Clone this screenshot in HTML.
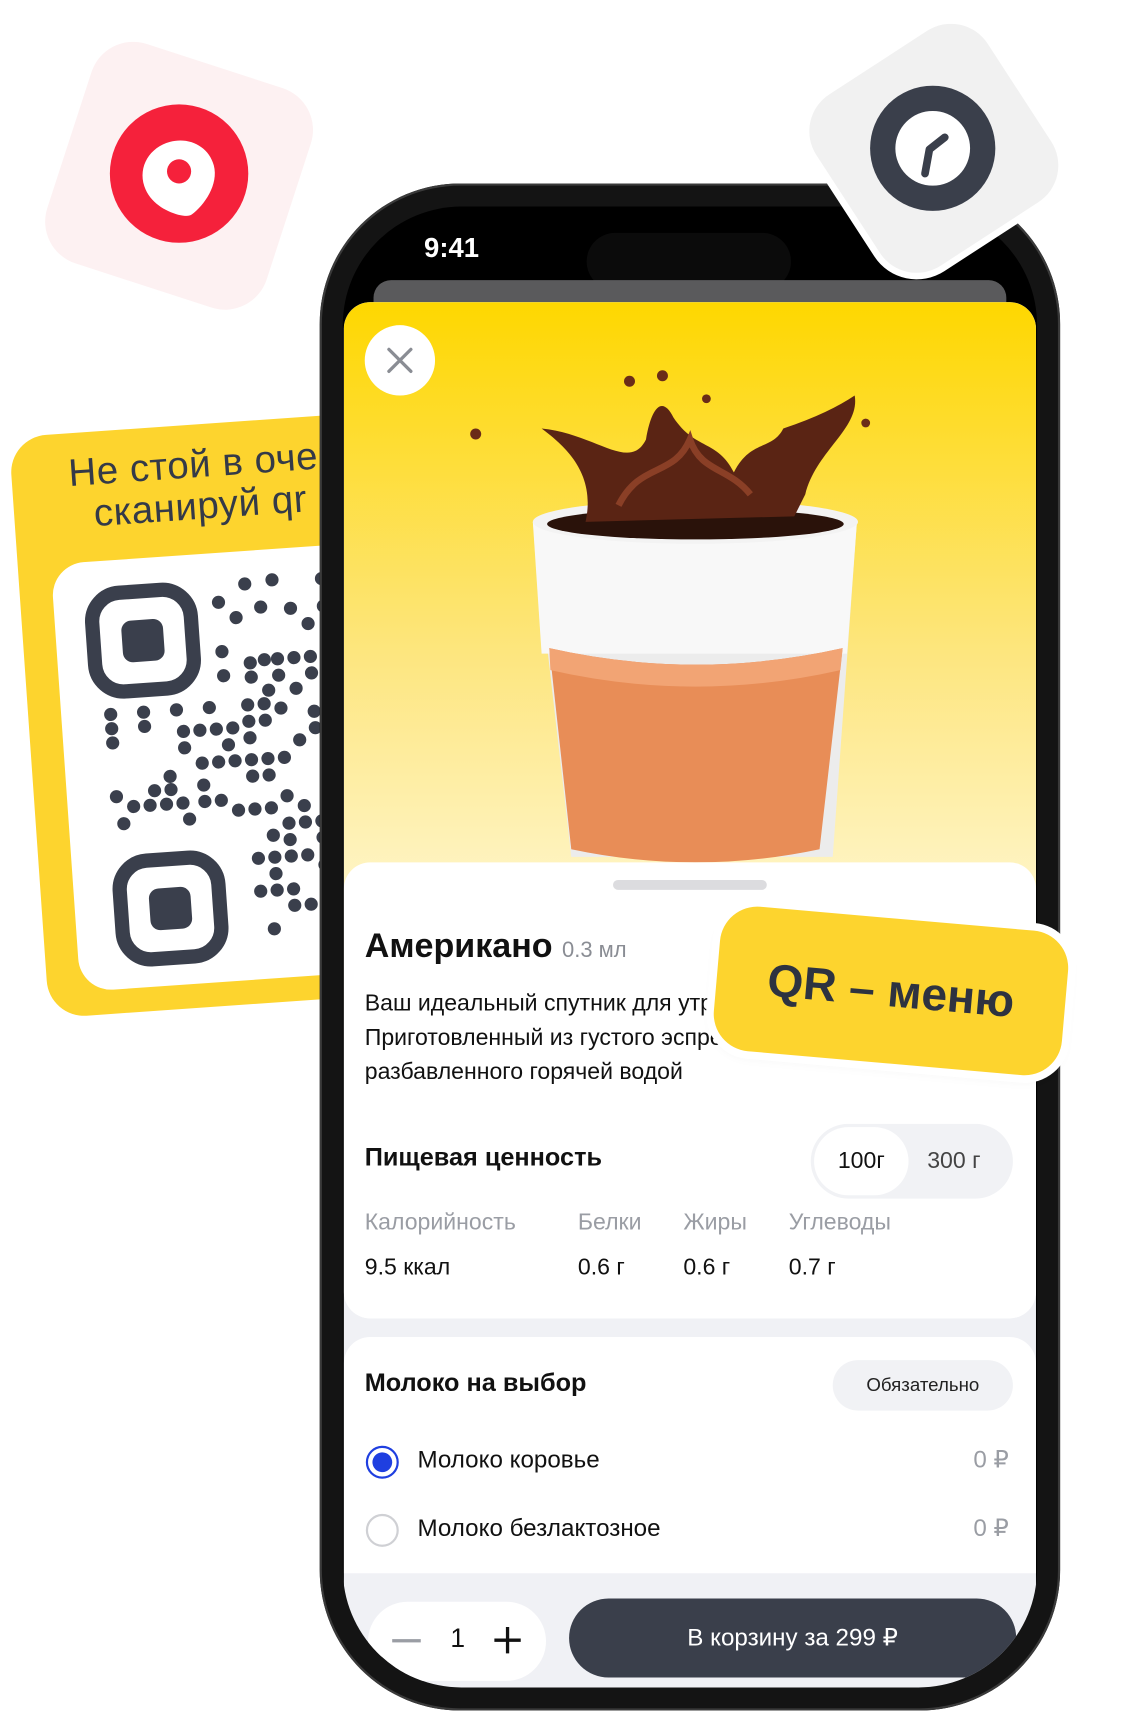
<!DOCTYPE html>
<html><head><meta charset="utf-8"><style>
*{margin:0;padding:0;box-sizing:border-box}
body{width:1125px;height:1705px;overflow:hidden;background:#fff;font-family:"Liberation Sans",sans-serif}
#w{position:absolute;left:0;top:0;width:1024px;height:1552px;transform:scale(1.0986);transform-origin:0 0}
.abs{position:absolute}
</style></head><body><div id="w">

<!-- red pin card -->
<div class="abs" style="left:58px;top:55px;width:210px;height:210px;border-radius:40px;background:#fdf1f2;transform:rotate(18deg)"></div>
<svg class="abs" style="left:95px;top:92px" width="136" height="136" viewBox="0 0 136 136">
<circle cx="68" cy="66" r="63" fill="#f5213b"/>
<path d="M68 36c-19 0-34 14-33 33 1 16 13 27 23 33 6 3 9 4 12 3 13-5 31-20 31-38 0-18-15-31-33-31z" fill="#fff" transform="rotate(-15 68 68)"/>
<circle cx="68" cy="64" r="11" fill="#f5213b"/>
</svg>

<!-- QR card -->
<div class="abs" style="left:26px;top:385px;width:360px;height:530px;border-radius:34px;background:#fdd42e;transform:rotate(-4deg);overflow:hidden">
 <div class="abs" style="left:52px;top:18px;font-size:35px;line-height:38px;color:#343a48;white-space:nowrap;letter-spacing:0.5px">Не стой в очереди —<br>&nbsp;&nbsp;сканируй qr</div>
 <div class="abs" style="left:30px;top:118px;width:360px;height:390px;border-radius:30px;background:#fff">
 <svg width="360" height="390" viewBox="0 0 360 390" fill="#3a3f4c">
  <rect x="34" y="30" width="90" height="90" rx="26" fill="none" stroke="#3a3f4c" stroke-width="13"/>
  <rect x="60" y="56" width="38" height="38" rx="9"/>
  <rect x="42" y="275" width="90" height="90" rx="26" fill="none" stroke="#3a3f4c" stroke-width="13"/>
  <rect x="68" y="301" width="38" height="38" rx="9"/>
  <g>
  <circle cx="150" cy="45" r="6"/><circle cx="175" cy="30" r="6"/><circle cx="200" cy="28" r="6"/><circle cx="188" cy="52" r="6"/><circle cx="165" cy="60" r="6"/><circle cx="215" cy="55" r="6"/><circle cx="245" cy="30" r="6"/><circle cx="245" cy="55" r="6"/><circle cx="230" cy="70" r="6"/>
  <circle cx="150" cy="90" r="6"/><circle cx="150" cy="112" r="6"/><circle cx="175" cy="102" r="6"/><circle cx="188" cy="100" r="6"/><circle cx="200" cy="100" r="6"/><circle cx="215" cy="100" r="6"/><circle cx="230" cy="100" r="6"/><circle cx="245" cy="100" r="6"/>
  <circle cx="175" cy="115" r="6"/><circle cx="200" cy="115" r="6"/><circle cx="230" cy="115" r="6"/><circle cx="190" cy="128" r="6"/><circle cx="215" cy="128" r="6"/><circle cx="245" cy="128" r="6"/>
  <circle cx="45" cy="140" r="6"/><circle cx="45" cy="153" r="6"/><circle cx="45" cy="166" r="6"/><circle cx="75" cy="140" r="6"/><circle cx="75" cy="153" r="6"/><circle cx="105" cy="140" r="6"/><circle cx="135" cy="140" r="6"/>
  <circle cx="170" cy="140" r="6"/><circle cx="185" cy="140" r="6"/><circle cx="170" cy="155" r="6"/><circle cx="185" cy="155" r="6"/><circle cx="200" cy="145" r="6"/><circle cx="170" cy="170" r="6"/>
  <circle cx="110" cy="160" r="6"/><circle cx="125" cy="160" r="6"/><circle cx="140" cy="160" r="6"/><circle cx="155" cy="160" r="6"/><circle cx="110" cy="175" r="6"/><circle cx="150" cy="175" r="6"/>
  <circle cx="125" cy="190" r="6"/><circle cx="140" cy="190" r="6"/><circle cx="155" cy="190" r="6"/><circle cx="170" cy="190" r="6"/><circle cx="185" cy="190" r="6"/><circle cx="200" cy="190" r="6"/><circle cx="185" cy="205" r="6"/><circle cx="170" cy="205" r="6"/>
  <circle cx="95" cy="200" r="6"/><circle cx="80" cy="212" r="6"/><circle cx="95" cy="212" r="6"/><circle cx="60" cy="225" r="6"/><circle cx="75" cy="225" r="6"/><circle cx="90" cy="225" r="6"/><circle cx="105" cy="225" r="6"/>
  <circle cx="125" cy="210" r="6"/><circle cx="125" cy="225" r="6"/><circle cx="140" cy="225" r="6"/><circle cx="155" cy="235" r="6"/><circle cx="170" cy="235" r="6"/><circle cx="185" cy="235" r="6"/>
  <circle cx="45" cy="215" r="6"/><circle cx="50" cy="240" r="6"/><circle cx="110" cy="240" r="6"/><circle cx="200" cy="225" r="6"/><circle cx="215" cy="175" r="6"/><circle cx="230" cy="150" r="6"/><circle cx="230" cy="165" r="6"/><circle cx="245" cy="170" r="6"/>
  <circle cx="200" cy="250" r="6"/><circle cx="215" cy="250" r="6"/><circle cx="230" cy="250" r="6"/><circle cx="215" cy="235" r="6"/><circle cx="185" cy="260" r="6"/><circle cx="200" cy="265" r="6"/><circle cx="230" cy="265" r="6"/><circle cx="245" cy="250" r="6"/><circle cx="240" cy="205" r="6"/>
  <circle cx="170" cy="280" r="6"/><circle cx="185" cy="280" r="6"/><circle cx="200" cy="280" r="6"/><circle cx="215" cy="280" r="6"/><circle cx="185" cy="295" r="6"/><circle cx="230" cy="290" r="6"/>
  <circle cx="170" cy="310" r="6"/><circle cx="185" cy="310" r="6"/><circle cx="200" cy="310" r="6"/><circle cx="200" cy="325" r="6"/><circle cx="215" cy="325" r="6"/><circle cx="180" cy="345" r="6"/><circle cx="235" cy="340" r="6"/><circle cx="245" cy="315" r="6"/>
  </g>
 </svg></div>
</div>

<!-- phone -->
<div class="abs" style="left:291px;top:167px;width:674px;height:1390px;border-radius:128px;background:#141414;box-shadow:0 0 0 2px #3a3a3a inset"></div>
<div class="abs" style="left:312px;top:188px;width:632px;height:1348px;border-radius:108px;background:#000;overflow:hidden">
 <div class="abs" style="left:74px;top:24px;color:#fff;font-size:25px;font-weight:bold">9:41</div>
 <div class="abs" style="left:222px;top:24px;width:186px;height:52px;border-radius:26px;background:#0b0b0b"></div>
 <div class="abs" style="left:28px;top:67px;width:576px;height:40px;border-radius:16px;background:#5a5a5c"></div>
 <div class="abs" style="left:1px;top:87px;width:630px;height:1261px;border-radius:24px 24px 0 0;background:#f0f1f5;overflow:hidden">
  <div class="abs" style="left:0;top:0;width:630px;height:925px;border-radius:24px;background:linear-gradient(#fed700 0%,#fde680 35%,#fff6cc 60%,#fff 82%)"></div>
  <div class="abs" style="left:19px;top:21px;width:64px;height:64px;border-radius:50%;background:#fff"></div>
  <svg class="abs" style="left:38px;top:40px" width="26" height="26"><path d="M3 3L23 23M23 3L3 23" stroke="#8a8d94" stroke-width="3" stroke-linecap="round"/></svg>
  <!-- cup -->
  <svg class="abs" style="left:100px;top:60px" width="400" height="450" viewBox="0 0 400 450">
   <path d="M72 140 L367 140 L345 445 L107 445 Z" fill="#ececec"/>
   <path d="M72 140 L367 140 L358 260 L80 260 Z" fill="#f8f8f8"/>
   <path d="M87 255 Q220 285 354 255 L333 438 Q220 462 107 438 Z" fill="#e88d57"/>
   <path d="M87 255 Q220 285 354 255 L352 275 Q220 305 88 275 Z" fill="#f2a474"/>
   <ellipse cx="220" cy="140" rx="148" ry="20" fill="#f3f3f3"/>
   <ellipse cx="220" cy="142" rx="135" ry="14" fill="#2a120a"/>
   <path d="M120 140 C130 95 100 70 80 55 C130 60 160 95 175 65 C180 35 190 25 200 45 C220 75 240 65 255 95 C270 65 290 75 300 55 C330 45 350 35 365 25 C370 55 330 75 320 115 L310 135 Z" fill="#5a2414"/>
   <path d="M150 125 C170 85 200 100 215 65 C225 95 250 90 270 115" fill="none" stroke="#8a3f26" stroke-width="6"/>
   <circle cx="160" cy="12" r="5" fill="#6a2c18"/><circle cx="190" cy="7" r="5" fill="#6a2c18"/><circle cx="20" cy="60" r="5" fill="#6a2c18"/><circle cx="375" cy="50" r="4" fill="#6a2c18"/><circle cx="230" cy="28" r="4" fill="#6a2c18"/>
  </svg>
  <div class="abs" style="left:0;top:510px;width:630px;height:415px;border-radius:24px;background:#fff"></div>
  <div class="abs" style="left:245px;top:526px;width:140px;height:9px;border-radius:5px;background:#dcdcdf"></div>
  <div class="abs" style="left:19px;top:568px;font-size:31px;font-weight:bold;color:#111;white-space:nowrap">Американо <span style="font-size:20px;font-weight:normal;color:#8a8d94">0.3 мл</span></div>
  <div class="abs" style="left:19px;top:623px;font-size:21px;line-height:31px;color:#111;white-space:nowrap">Ваш идеальный спутник для утра.<br>Приготовленный из густого эспрессо,<br>разбавленного горячей водой</div>
  <div class="abs" style="left:19px;top:765px;font-size:23px;font-weight:bold;color:#111">Пищевая ценность</div>
  <div class="abs" style="left:425px;top:748px;width:184px;height:68px;border-radius:34px;background:#f1f2f5"></div>
  <div class="abs" style="left:428px;top:751px;width:86px;height:62px;border-radius:31px;background:#fff;font-size:21px;line-height:62px;text-align:center;color:#111">100г</div>
  <div class="abs" style="left:531px;top:751px;font-size:21px;line-height:62px;color:#444">300 г</div>
  <div class="abs" style="left:19px;top:826px;font-size:21px;color:#9a9da4">Калорийность</div>
  <div class="abs" style="left:213px;top:826px;font-size:21px;color:#9a9da4">Белки</div>
  <div class="abs" style="left:309px;top:826px;font-size:21px;color:#9a9da4">Жиры</div>
  <div class="abs" style="left:405px;top:826px;font-size:21px;color:#9a9da4">Углеводы</div>
  <div class="abs" style="left:19px;top:867px;font-size:21px;color:#111">9.5 ккал</div>
  <div class="abs" style="left:213px;top:867px;font-size:21px;color:#111">0.6 г</div>
  <div class="abs" style="left:309px;top:867px;font-size:21px;color:#111">0.6 г</div>
  <div class="abs" style="left:405px;top:867px;font-size:21px;color:#111">0.7 г</div>
  <div class="abs" style="left:0;top:942px;width:630px;height:215px;border-radius:24px 24px 0 0;background:#fff"></div>
  <div class="abs" style="left:19px;top:970px;font-size:23px;font-weight:bold;color:#111">Молоко на выбор</div>
  <div class="abs" style="left:445px;top:963px;width:164px;height:46px;border-radius:23px;background:#f1f2f5;font-size:17px;line-height:46px;text-align:center;color:#222">Обязательно</div>
  <div class="abs" style="left:20px;top:1041px;width:30px;height:30px;border-radius:50%;border:2px solid #1f3fe0;background:#fff"></div>
  <div class="abs" style="left:26px;top:1047px;width:18px;height:18px;border-radius:50%;background:#1f3fe0"></div>
  <div class="abs" style="left:67px;top:1041px;font-size:22px;color:#111">Молоко коровье</div>
  <div class="abs" style="left:573px;top:1041px;font-size:22px;color:#9a9da4">0 ₽</div>
  <div class="abs" style="left:20px;top:1103px;width:30px;height:30px;border-radius:50%;border:2px solid #cfd0d4;background:#fff"></div>
  <div class="abs" style="left:67px;top:1103px;font-size:22px;color:#111">Молоко безлактозное</div>
  <div class="abs" style="left:573px;top:1103px;font-size:22px;color:#9a9da4">0 ₽</div>
  <div class="abs" style="left:22px;top:1183px;width:162px;height:72px;border-radius:36px;background:#fff"></div>
  <div class="abs" style="left:44px;top:1217px;width:26px;height:3px;background:#9a9da4"></div>
  <div class="abs" style="left:97px;top:1203px;font-size:24px;color:#111">1</div>
  <svg class="abs" style="left:136px;top:1205px" width="26" height="26"><path d="M13 1V25M1 13H25" stroke="#111" stroke-width="3"/></svg>
  <div class="abs" style="left:205px;top:1180px;width:407px;height:72px;border-radius:36px;background:#3a3f4b;color:#fff;font-size:22px;line-height:72px;text-align:center">В корзину за 299 ₽</div>
 </div>
</div>

<!-- clock card -->
<div class="abs" style="left:757px;top:42px;width:186px;height:186px;border-radius:40px;background:#f1f1f1;transform:rotate(-33deg);box-shadow:0 0 0 6px #fff"></div>
<svg class="abs" style="left:790px;top:76px" width="118" height="118" viewBox="0 0 118 118">
<circle cx="59" cy="59" r="57" fill="#3a3f4b"/><circle cx="59" cy="59" r="34" fill="#fff"/>
<path d="M52 82 L56 60 L70 49" fill="none" stroke="#3a3f4b" stroke-width="7" stroke-linecap="round" stroke-linejoin="round"/>
</svg>

<!-- QR menu tag -->
<div class="abs" style="left:652px;top:836px;width:318px;height:132px;border-radius:34px;background:#fdd42e;transform:rotate(5deg);box-shadow:0 0 0 7px #fff,0 4px 12px rgba(0,0,0,.06)">
 <div style="text-align:center;line-height:132px;font-size:42px;font-weight:bold;color:#2e3340">QR – меню</div>
</div>

</div></body></html>
